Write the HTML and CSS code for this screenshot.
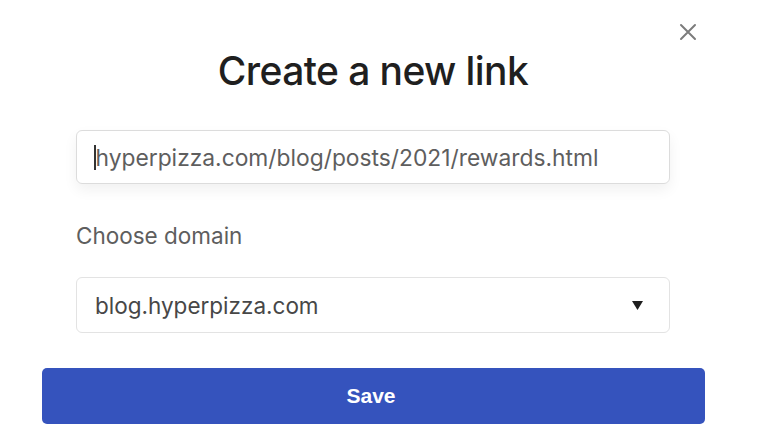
FILE: index.html
```html
<!DOCTYPE html>
<html lang="en">
<head>
<meta charset="utf-8">
<title>Create a new link</title>
<link rel="stylesheet" href="styles.css">
</head>
<body>
<div class="modal">
  <button class="close" aria-label="Close">
    <svg width="18" height="18" viewBox="0 0 18 18"><path d="M2 2 L16 16 M16 2 L2 16" stroke="#7c7c7c" stroke-width="2" stroke-linecap="round"/></svg>
  </button>
  <h1 class="title">Create a new link</h1>
  <div class="fields">
    <div class="input"><span class="caret"></span>hyperpizza.com/blog/posts/2021/rewards.html</div>
    <div class="label">Choose domain</div>
    <div class="select">
      <span>blog.hyperpizza.com</span>
      <svg class="arrow" width="11" height="9" viewBox="0 0 11 9"><path d="M0 0 H11 L5.5 9 Z" fill="#1e1e1e"/></svg>
    </div>
  </div>
  <div class="actions">
    <button class="save">Save</button>
  </div>
</div>
</body>
</html>
```
FILE: styles.css
```css
html, body {
  margin: 0;
  padding: 0;
  background: #ffffff;
}
body {
  font-family: Inter, "Noto Sans", sans-serif;
  width: 758px;
  height: 440px;
  overflow: hidden;
}
.modal {
  position: relative;
  height: 440px;
  box-sizing: border-box;
  padding-top: 46px;
}
.close {
  position: absolute;
  top: 23px;
  left: 679px;
  width: 18px;
  height: 18px;
  padding: 0;
  border: 0;
  background: none;
  display: block;
}
.close svg { display: block; }
.title {
  margin: 0;
  padding-right: 12px;
  text-align: center;
  font-size: 39px;
  font-weight: 500;
  color: #1f1f1f;
  line-height: 50px;
  letter-spacing: -0.6px;
}
.fields {
  margin: 34px 88px 0 76px;
  display: flex;
  flex-direction: column;
}
.input {
  height: 54px;
  box-sizing: border-box;
  border: 1px solid #dcdcdc;
  border-radius: 6px;
  box-shadow: 0 6px 14px rgba(0,0,0,0.06);
  display: flex;
  align-items: center;
  padding-left: 17px;
  font-size: 22.8px;
  color: #5e5e5e;
}
.caret {
  display: inline-block;
  width: 1.5px;
  height: 25px;
  background: #333;
  margin-right: 0;
}
.label {
  margin-top: 38px;
  font-size: 22.5px;
  color: #5e5e5e;
  line-height: 27px;
}
.select {
  margin-top: 28px;
  height: 56px;
  box-sizing: border-box;
  border: 1px solid #e3e3e3;
  border-radius: 6px;
  display: flex;
  align-items: center;
  justify-content: space-between;
  padding: 0 26px 0 18px;
  font-size: 22.5px;
  color: #474747;
}
.arrow {
  display: block;
}
.actions {
  margin: 35px 53px 0 42px;
}
.save {
  width: 100%;
  height: 56px;
  border: 0;
  border-radius: 5px;
  background: #3553bd;
  color: #fff;
  font-family: "Liberation Sans", Arial, sans-serif;
  font-weight: 700;
  font-size: 21px;
  display: block;
  padding: 0 5px 0 0;
}
```
